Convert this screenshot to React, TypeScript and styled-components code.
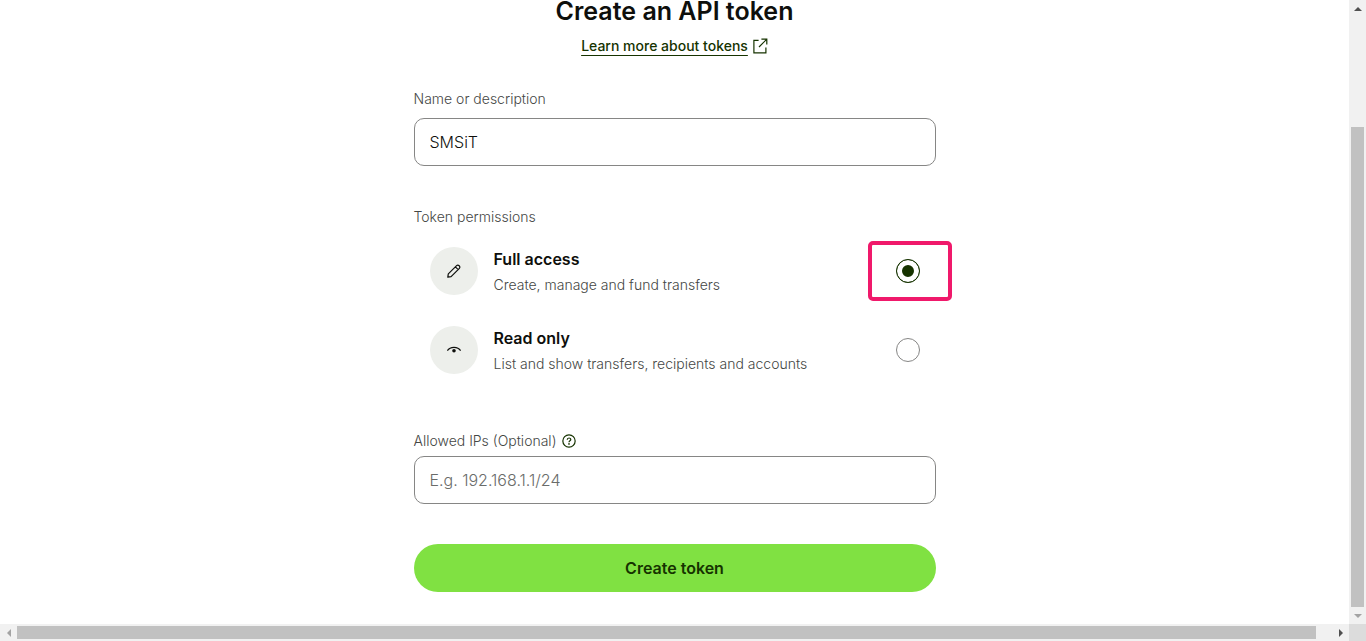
import React, { useState } from "react";
import styled, { createGlobalStyle } from "styled-components";

const GlobalStyle = createGlobalStyle`
  * { box-sizing: border-box; }
  body {
    margin: 0;
    background: #fff;
    color: #0e0f0c;
    font-family: Inter, "Liberation Sans", sans-serif;
  }
`;

const Window = styled.div`
  display: grid;
  grid-template-columns: 1fr 17px;
  grid-template-rows: 1fr 17px;
  height: 100vh;
`;

const Page = styled.main`
  min-width: 0;
`;

const Form = styled.form`
  display: flex;
  flex-direction: column;
  max-width: 522px;
  margin: 0 auto;
`;

const Title = styled.h1`
  margin: 0 0 12px;
  font-size: 25px;
  line-height: 22px;
  font-weight: 600;
  text-align: center;
`;

const LearnMore = styled.a`
  display: flex;
  align-self: center;
  align-items: center;
  gap: 5px;
  margin-bottom: 30px;
  color: #163300;
  font-size: 14px;
  line-height: 24px;
  font-weight: 550;
  text-decoration: none;

  span {
    text-decoration: underline;
    text-decoration-thickness: 1px;
    text-underline-offset: 4px;
  }
`;

const Field = styled.div<{ $gap: number; $after: number }>`
  display: flex;
  flex-direction: column;
  gap: ${(p) => p.$gap}px;
  margin-bottom: ${(p) => p.$after}px;
`;

const LabelRow = styled.div`
  display: flex;
  align-items: center;
  gap: 5px;
`;

const Label = styled.label`
  color: #454745;
  font-size: 14px;
  line-height: 22px;
  font-weight: 350;
`;

const TextInput = styled.input`
  width: 100%;
  height: 48px;
  padding: 0 15px;
  border: 1px solid #868685;
  border-radius: 10px;
  background: #fff;
  color: #0e0f0c;
  font: 350 16px/24px Inter, "Liberation Sans", sans-serif;
  outline: none;

  &::placeholder { color: #6a6c6a; opacity: 1; }
`;

const HelpButton = styled.button`
  display: flex;
  padding: 0;
  border: 0;
  background: none;
  color: #163300;
`;

const Permissions = styled.fieldset`
  min-width: 0;
  margin: 0 0 56px;
  padding: 0;
  border: 0;
`;

const Legend = styled.legend`
  padding: 0;
  margin-bottom: 19px;
  color: #454745;
  font-size: 14px;
  line-height: 22px;
  font-weight: 350;
`;

const Options = styled.div`
  display: flex;
  flex-direction: column;
  gap: 31px;
  padding: 0 16px;
`;

const Option = styled.label`
  display: flex;
  align-items: center;
  height: 48px;
`;

const Avatar = styled.span`
  display: flex;
  align-items: center;
  justify-content: center;
  width: 48px;
  height: 48px;
  margin-right: 16px;
  border-radius: 50%;
  background: #edefeb;
`;

const OptionText = styled.span`
  display: flex;
  flex: 1;
  flex-direction: column;
  gap: 3px;
`;

const OptionName = styled.span`
  font-size: 16px;
  line-height: 24px;
  font-weight: 600;
`;

const OptionHint = styled.span`
  color: #454745;
  font-size: 14px;
  line-height: 22px;
  font-weight: 350;
`;

const RadioSlot = styled.span`
  position: relative;
  display: flex;
`;

const Radio = styled.input`
  appearance: none;
  width: 24px;
  height: 24px;
  margin: 0;
  border: 1px solid #868685;
  border-radius: 50%;
  background: #fff;

  &:checked {
    border-color: #163300;
    background: #163300;
    box-shadow: inset 0 0 0 5px #fff;
  }
`;

const Highlight = styled.span`
  position: absolute;
  inset: -18px -32px -18px -28px;
  border: 4px solid #f0196b;
  border-radius: 5px;
  pointer-events: none;
`;

const Submit = styled.button`
  height: 48px;
  border: 0;
  border-radius: 24px;
  background: #80e142;
  color: #163300;
  font: 600 16px/24px Inter, "Liberation Sans", sans-serif;
`;

const ScrollTrack = styled.div<{ $vertical?: boolean }>`
  display: flex;
  flex-direction: ${(p) => (p.$vertical ? "column" : "row")};
  align-items: center;
  min-height: 0;
  background: #f1f1f1;
`;

const ScrollArrow = styled.span`
  display: flex;
  flex: 0 0 17px;
  align-items: center;
  justify-content: center;
`;

const ScrollSpace = styled.span<{ $share: number }>`
  flex: ${(p) => p.$share} 1 0;
`;

const ScrollThumb = styled.span<{ $vertical?: boolean; $share: number }>`
  flex: ${(p) => p.$share} 1 0;
  ${(p) => (p.$vertical ? "width: 13px;" : "height: 13px;")}
  background: #c1c1c1;
`;

const Corner = styled.div`
  background: #dcdcdc;
`;

const stroke = { fill: "none", stroke: "currentColor" };

const ExternalIcon = () => (
  <svg width="15" height="16" viewBox="0 0 15 16" {...stroke} strokeWidth="1.2" aria-hidden="true">
    <path d="M5.6 2.4H.9v12.4h12V9.6M8.4 1.2h5.4v5.4M13.6 1.4 6 9" />
  </svg>
);

const PencilIcon = () => (
  <svg width="16" height="16" viewBox="0 0 16 16" {...stroke} strokeWidth="1.2" strokeLinejoin="round" aria-hidden="true">
    <path d="M1.8 14.2 2.3 10.9 10.6 2.6Q11.8 1.4 13.2 2.7T13.4 5.4L5.1 13.7ZM9.4 3.8 12.2 6.6" />
  </svg>
);

const EyeIcon = () => (
  <svg width="16" height="16" viewBox="0 0 16 16" {...stroke} strokeWidth="1.2" aria-hidden="true">
    <path d="M1.4 8.6C4.2 4.2 11.8 4.2 14.6 8.6" />
    <circle cx="8" cy="8.7" r="1.8" fill="currentColor" stroke="none" />
  </svg>
);

const HelpIcon = () => (
  <svg width="14" height="14" viewBox="0 0 15 15" {...stroke} strokeWidth="1.3" aria-hidden="true">
    <circle cx="7.5" cy="7.5" r="6.6" />
    <path d="M5.6 6.2C5.6 3.7 9.4 3.7 9.4 6C9.4 7.4 7.5 7.3 7.5 8.9" />
    <circle cx="7.5" cy="10.6" r=".9" fill="currentColor" stroke="none" />
  </svg>
);

const arrows = {
  up: "M0 6 4 2 8 6Z",
  down: "M0 2 4 6 8 2Z",
  left: "M6 0 2 4 6 8Z",
  right: "M2 0 6 4 2 8Z",
};

const Arrow = ({ to, muted }: { to: keyof typeof arrows; muted?: boolean }) => (
  <ScrollArrow>
    <svg width="8" height="8" viewBox="0 0 8 8" aria-hidden="true">
      <path d={arrows[to]} fill={muted ? "#a3a3a3" : "#505050"} />
    </svg>
  </ScrollArrow>
);

const permissions = [
  { id: "full", name: "Full access", hint: "Create, manage and fund transfers", icon: <PencilIcon />, highlighted: true },
  { id: "read", name: "Read only", hint: "List and show transfers, recipients and accounts", icon: <EyeIcon />, highlighted: false },
];

export default function App() {
  const [name, setName] = useState("SMSiT");
  const [access, setAccess] = useState("full");

  return (
    <>
      <GlobalStyle />
      <Window>
        <Page>
          <Form onSubmit={(e) => e.preventDefault()}>
            <Title>Create an API token</Title>
            <LearnMore href="#tokens">
              <span>Learn more about tokens</span>
              <ExternalIcon />
            </LearnMore>

            <Field $gap={8} $after={40}>
              <Label htmlFor="token-name">Name or description</Label>
              <TextInput id="token-name" value={name} onChange={(e) => setName(e.target.value)} />
            </Field>

            <Permissions>
              <Legend>Token permissions</Legend>
              <Options>
                {permissions.map((p) => (
                  <Option key={p.id}>
                    <Avatar>{p.icon}</Avatar>
                    <OptionText>
                      <OptionName>{p.name}</OptionName>
                      <OptionHint>{p.hint}</OptionHint>
                    </OptionText>
                    <RadioSlot>
                      <Radio type="radio" name="access" checked={access === p.id} onChange={() => setAccess(p.id)} />
                      {p.highlighted && <Highlight />}
                    </RadioSlot>
                  </Option>
                ))}
              </Options>
            </Permissions>

            <Field $gap={4} $after={40}>
              <LabelRow>
                <Label htmlFor="allowed-ips">Allowed IPs (Optional)</Label>
                <HelpButton type="button" aria-label="About allowed IPs">
                  <HelpIcon />
                </HelpButton>
              </LabelRow>
              <TextInput id="allowed-ips" placeholder="E.g. 192.168.1.1/24" />
            </Field>

            <Submit type="submit">Create token</Submit>
          </Form>
        </Page>
        <ScrollTrack $vertical>
          <Arrow to="up" />
          <ScrollSpace $share={110} />
          <ScrollThumb $vertical $share={480} />
          <Arrow to="down" muted />
        </ScrollTrack>
        <ScrollTrack>
          <Arrow to="left" muted />
          <ScrollThumb $share={1299} />
          <ScrollSpace $share={16} />
          <Arrow to="right" />
        </ScrollTrack>
        <Corner />
      </Window>
    </>
  );
}
